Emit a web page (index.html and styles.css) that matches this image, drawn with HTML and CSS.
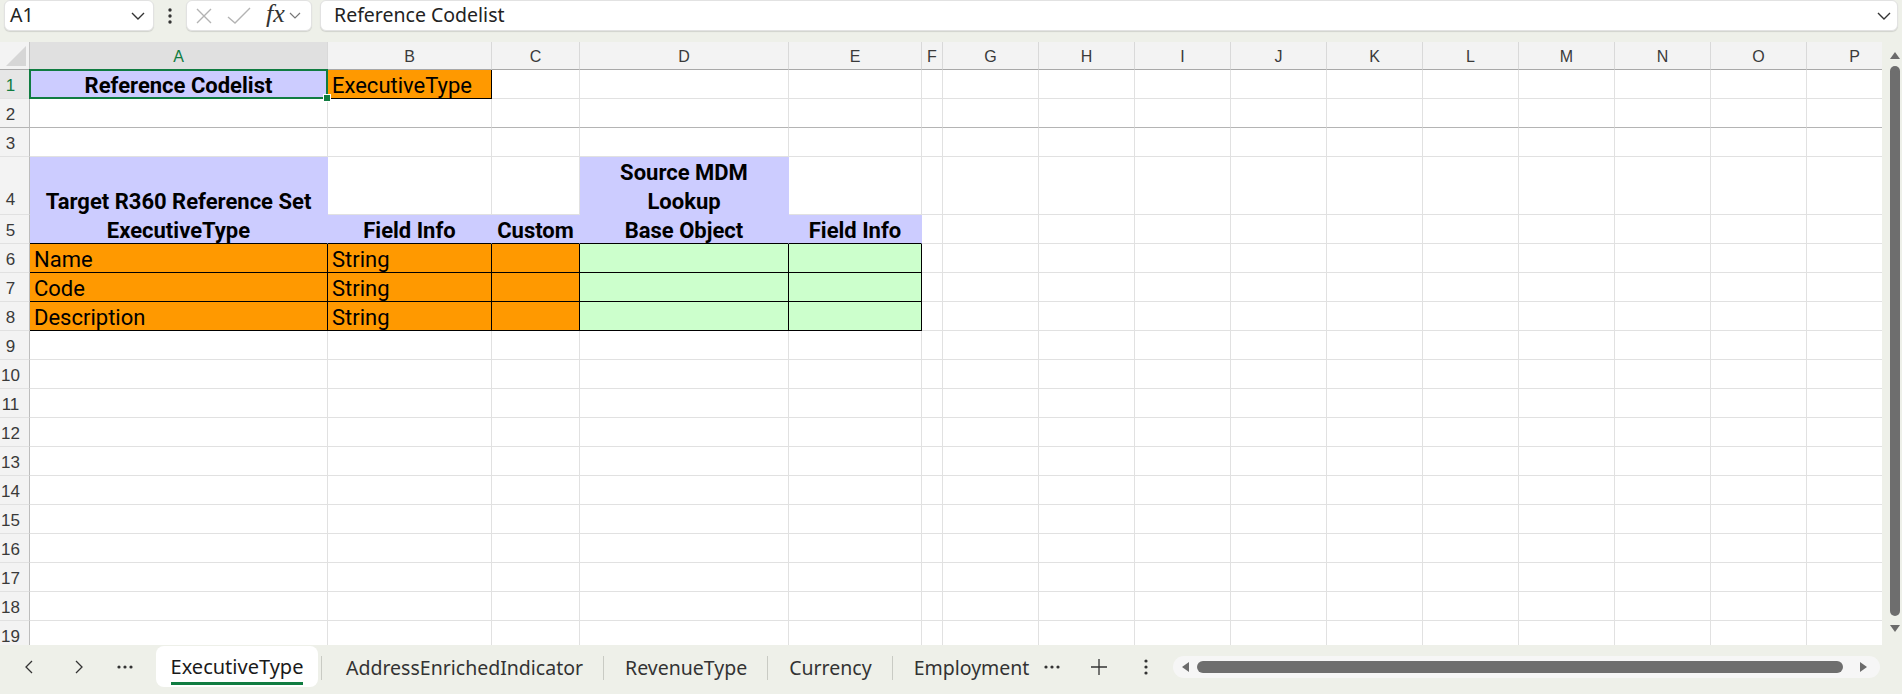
FILE: index.html
```html
<!DOCTYPE html>
<html>
<head>
<meta charset="utf-8">
<link rel="stylesheet" href="styles.css">
</head>
<body>
<div class="fbar">
  <div class="box namebox"><span class="nb-text">A1</span>
    <svg class="chev" width="14" height="8" viewBox="0 0 14 8"><polyline points="1,1 7,7 13,1" fill="none" stroke="#333" stroke-width="1.4"/></svg>
  </div>
  <div class="vdots"><svg width="6" height="16" viewBox="0 0 6 16"><circle cx="3" cy="2" r="1.7" fill="#333"/><circle cx="3" cy="8" r="1.7" fill="#333"/><circle cx="3" cy="14" r="1.7" fill="#333"/></svg></div>
  <div class="box fnbox">
    <svg class="ic-x" width="18" height="18" viewBox="0 0 18 18"><path d="M2 2 L16 16 M16 2 L2 16" stroke="#b3b3b3" stroke-width="1.4" fill="none"/></svg>
    <svg class="ic-ok" width="24" height="18" viewBox="0 0 24 18"><polyline points="1,10 8,16 23,1" stroke="#b3b3b3" stroke-width="1.4" fill="none"/></svg>
    <span class="fx">fx</span>
    <svg class="chev-s" width="12" height="7" viewBox="0 0 12 7"><polyline points="1,1 6,6 11,1" fill="none" stroke="#777" stroke-width="1.2"/></svg>
  </div>
  <div class="box formula"><span class="f-text">Reference Codelist</span>
    <svg class="chev" width="14" height="8" viewBox="0 0 14 8"><polyline points="1,1 7,7 13,1" fill="none" stroke="#333" stroke-width="1.4"/></svg>
  </div>
</div>

<div class="main">
  <div class="sheetwrap">
    <table class="sheet">
      <colgroup>
        <col class="w-rh"><col class="w-a"><col class="w-b"><col class="w-c"><col class="w-d"><col class="w-e"><col class="w-f">
        <col class="w-g"><col class="w-g"><col class="w-g"><col class="w-g"><col class="w-g"><col class="w-g"><col class="w-g"><col class="w-g"><col class="w-g"><col class="w-g">
      </colgroup>
      <thead>
        <tr class="hr">
          <th class="corner"><svg width="22" height="22" viewBox="0 0 22 22"><polygon points="21,1 21,21 1,21" fill="#d6d6d6"/></svg></th>
          <th class="col sel">A</th><th class="col">B</th><th class="col">C</th><th class="col">D</th><th class="col">E</th><th class="col">F</th><th class="col">G</th><th class="col">H</th><th class="col">I</th><th class="col">J</th><th class="col">K</th><th class="col">L</th><th class="col">M</th><th class="col">N</th><th class="col">O</th><th class="col">P</th>
        </tr>
      </thead>
      <tbody>
        <tr class="r">
          <th class="rh sel">1</th>
          <td class="lav b ctr a1">Reference Codelist<span class="selbox"></span><span class="handle"></span></td>
          <td class="org bx">ExecutiveType</td>
          <td></td><td></td><td></td><td></td><td></td><td></td><td></td><td></td><td></td><td></td><td></td><td></td><td></td><td></td>
        </tr>
        <tr class="r frz">
          <th class="rh">2</th>
          <td></td><td></td><td></td><td></td><td></td><td></td><td></td><td></td><td></td><td></td><td></td><td></td><td></td><td></td><td></td><td></td>
        </tr>
        <tr class="r">
          <th class="rh">3</th>
          <td></td><td></td><td></td><td></td><td></td><td></td><td></td><td></td><td></td><td></td><td></td><td></td><td></td><td></td><td></td><td></td>
        </tr>
        <tr class="r tall">
          <th class="rh">4</th>
          <td class="lav b ctr">Target R360 Reference Set</td>
          <td></td><td></td>
          <td class="lav b ctr two"><div class="two-in">Source MDM<br>Lookup</div></td>
          <td></td><td></td><td></td><td></td><td></td><td></td><td></td><td></td><td></td><td></td><td></td><td></td>
        </tr>
        <tr class="r">
          <th class="rh">5</th>
          <td class="lav b ctr hb">ExecutiveType</td>
          <td class="lav b ctr hb">Field Info</td>
          <td class="lav b ctr hb">Custom</td>
          <td class="lav b ctr hb">Base Object</td>
          <td class="lav b ctr hb">Field Info</td>
          <td></td><td></td><td></td><td></td><td></td><td></td><td></td><td></td><td></td><td></td><td></td>
        </tr>
        <tr class="r">
          <th class="rh">6</th>
          <td class="org bx">Name</td><td class="org bx">String</td><td class="org bx"></td><td class="grn bx"></td><td class="grn bx"></td>
          <td></td><td></td><td></td><td></td><td></td><td></td><td></td><td></td><td></td><td></td><td></td>
        </tr>
        <tr class="r">
          <th class="rh">7</th>
          <td class="org bx">Code</td><td class="org bx">String</td><td class="org bx"></td><td class="grn bx"></td><td class="grn bx"></td>
          <td></td><td></td><td></td><td></td><td></td><td></td><td></td><td></td><td></td><td></td><td></td>
        </tr>
        <tr class="r">
          <th class="rh">8</th>
          <td class="org bx">Description</td><td class="org bx">String</td><td class="org bx"></td><td class="grn bx"></td><td class="grn bx"></td>
          <td></td><td></td><td></td><td></td><td></td><td></td><td></td><td></td><td></td><td></td><td></td>
        </tr>
        <tr class="r"><th class="rh">9</th><td></td><td></td><td></td><td></td><td></td><td></td><td></td><td></td><td></td><td></td><td></td><td></td><td></td><td></td><td></td><td></td></tr>
        <tr class="r"><th class="rh">10</th><td></td><td></td><td></td><td></td><td></td><td></td><td></td><td></td><td></td><td></td><td></td><td></td><td></td><td></td><td></td><td></td></tr>
        <tr class="r"><th class="rh">11</th><td></td><td></td><td></td><td></td><td></td><td></td><td></td><td></td><td></td><td></td><td></td><td></td><td></td><td></td><td></td><td></td></tr>
        <tr class="r"><th class="rh">12</th><td></td><td></td><td></td><td></td><td></td><td></td><td></td><td></td><td></td><td></td><td></td><td></td><td></td><td></td><td></td><td></td></tr>
        <tr class="r"><th class="rh">13</th><td></td><td></td><td></td><td></td><td></td><td></td><td></td><td></td><td></td><td></td><td></td><td></td><td></td><td></td><td></td><td></td></tr>
        <tr class="r"><th class="rh">14</th><td></td><td></td><td></td><td></td><td></td><td></td><td></td><td></td><td></td><td></td><td></td><td></td><td></td><td></td><td></td><td></td></tr>
        <tr class="r"><th class="rh">15</th><td></td><td></td><td></td><td></td><td></td><td></td><td></td><td></td><td></td><td></td><td></td><td></td><td></td><td></td><td></td><td></td></tr>
        <tr class="r"><th class="rh">16</th><td></td><td></td><td></td><td></td><td></td><td></td><td></td><td></td><td></td><td></td><td></td><td></td><td></td><td></td><td></td><td></td></tr>
        <tr class="r"><th class="rh">17</th><td></td><td></td><td></td><td></td><td></td><td></td><td></td><td></td><td></td><td></td><td></td><td></td><td></td><td></td><td></td><td></td></tr>
        <tr class="r"><th class="rh">18</th><td></td><td></td><td></td><td></td><td></td><td></td><td></td><td></td><td></td><td></td><td></td><td></td><td></td><td></td><td></td><td></td></tr>
        <tr class="r"><th class="rh">19</th><td></td><td></td><td></td><td></td><td></td><td></td><td></td><td></td><td></td><td></td><td></td><td></td><td></td><td></td><td></td><td></td></tr>
      </tbody>
    </table>
  </div>
  <div class="vscroll">
    <svg width="10" height="7" viewBox="0 0 10 7"><polygon points="5,0 10,7 0,7" fill="#6b6b6b"/></svg>
    <div class="vthumb"></div>
    <svg width="10" height="7" viewBox="0 0 10 7"><polygon points="0,0 10,0 5,7" fill="#6b6b6b"/></svg>
  </div>
</div>

<div class="tabbar">
  <div class="nav nav1"><svg width="8" height="14" viewBox="0 0 8 14"><polyline points="7,1 1,7 7,13" fill="none" stroke="#333" stroke-width="1.3"/></svg></div>
  <div class="nav nav2"><svg width="8" height="14" viewBox="0 0 8 14"><polyline points="1,1 7,7 1,13" fill="none" stroke="#333" stroke-width="1.3"/></svg></div>
  <div class="nav nav3"><svg width="16" height="4" viewBox="0 0 16 4"><circle cx="2" cy="2" r="1.6" fill="#333"/><circle cx="8" cy="2" r="1.6" fill="#333"/><circle cx="14" cy="2" r="1.6" fill="#333"/></svg></div>
  <div class="tabs">
    <div class="tab active"><span class="tab-lbl">ExecutiveType</span></div>
    <div class="sep"></div>
    <div class="tab t-first">AddressEnrichedIndicator</div>
    <div class="sep"></div>
    <div class="tab">RevenueType</div>
    <div class="sep"></div>
    <div class="tab">Currency</div>
    <div class="sep"></div>
    <div class="tab">Employment</div>
  </div>
  <div class="tbtn more"><svg width="16" height="4" viewBox="0 0 16 4"><circle cx="2" cy="2" r="1.6" fill="#333"/><circle cx="8" cy="2" r="1.6" fill="#333"/><circle cx="14" cy="2" r="1.6" fill="#333"/></svg></div>
  <div class="tbtn plus"><svg width="16" height="16" viewBox="0 0 16 16"><path d="M8 0 V16 M0 8 H16" stroke="#333" stroke-width="1.3"/></svg></div>
  <div class="tbtn kebab"><svg width="4" height="16" viewBox="0 0 4 16"><circle cx="2" cy="2" r="1.6" fill="#333"/><circle cx="2" cy="8" r="1.6" fill="#333"/><circle cx="2" cy="14" r="1.6" fill="#333"/></svg></div>
  <div class="hscroll">
    <svg width="7" height="10" viewBox="0 0 7 10"><polygon points="7,0 7,10 0,5" fill="#6b6b6b"/></svg>
    <div class="hthumb"></div>
    <svg width="7" height="10" viewBox="0 0 7 10"><polygon points="0,0 7,5 0,10" fill="#6b6b6b"/></svg>
  </div>
</div>
</body>
</html>
```

FILE: styles.css
```css
* { box-sizing: border-box; }
html, body { margin: 0; padding: 0; }
body {
  width: 1902px;
  height: 694px;
  overflow: hidden;
  background: #eef0e9;
  font-family: "Noto Sans", "Open Sans", sans-serif;
  color: #222;
}

/* formula bar */
.fbar {
  height: 42px;
  display: flex;
  align-items: flex-start;
  padding: 0 4px 0 4px;
  gap: 8px;
}
.box {
  height: 31px;
  background: #fff;
  border: 1px solid #e2e2e2;
  border-radius: 6px;
  box-shadow: 0 1px 1px rgba(0,0,0,0.12);
  display: flex;
  align-items: center;
}
.namebox { width: 150px; padding: 0 8px 0 5px; justify-content: space-between; }
.nb-text { font-size: 19.5px; color: #222; margin-top: -2px; }
.vdots { width: 16px; height: 31px; display: flex; align-items: center; justify-content: center; }
.fnbox { width: 126px; padding-left: 8px; }
.ic-x { margin-right: 14px; }
.ic-ok { margin-right: 15px; }
.fx {
  font-family: "Liberation Serif", serif;
  font-style: italic;
  font-size: 26px;
  color: #333;
  line-height: 26px;
  margin-right: 4px;
  margin-top: -3px;
}
.formula { flex: 1; padding: 0 6px 0 13px; justify-content: space-between; }
.f-text { font-size: 19.5px; color: #222; margin-top: -2px; }

/* main area */
.main { display: flex; height: 603px; }
.sheetwrap { width: 1882px; height: 603px; overflow: hidden; background: #fff; }
.sheet {
  border-collapse: separate;
  border-spacing: 0;
  table-layout: fixed;
  width: 1903px;
  font-family: Roboto, "Liberation Sans", sans-serif;
  font-size: 22px;
  color: #000;
}
.w-rh { width: 30px; }
.w-a { width: 298px; }
.w-b { width: 164px; }
.w-c { width: 88px; }
.w-d { width: 209px; }
.w-e { width: 133px; }
.w-f { width: 21px; }
.w-g { width: 96px; }

.hr { height: 28px; }
.corner {
  background: #f3f3f3;
  border-right: 1px solid #c4c4c4;
  border-bottom: 1px solid #a8a8a8;
  padding: 0;
  vertical-align: bottom;
  text-align: right;
}
.corner svg { display: block; margin: 0 2px 2px auto; }
.col {
  background: #f3f3f3;
  border-right: 1px solid #d9d9d9;
  border-bottom: 1px solid #a8a8a8;
  font-family: "Liberation Sans", Arial, sans-serif;
  font-size: 16px;
  font-weight: normal;
  color: #3a3a3a;
  padding: 2px 0 0 0;
  text-align: center;
}
.col.sel { background: #e0e0e0; color: #107c41; }

.r { height: 29px; }
.r.tall { height: 58px; }
.rh {
  background: #f3f3f3;
  border-right: 1px solid #bdbdbd;
  border-bottom: 1px solid #e1e1e1;
  font-family: "Liberation Sans", Arial, sans-serif;
  font-size: 17px;
  font-weight: normal;
  color: #3a3a3a;
  text-align: center;
  padding: 3px 8px 0 0;
  vertical-align: middle;
  white-space: nowrap;
}
.tall .rh { vertical-align: bottom; padding-bottom: 4px; }
.rh.sel { color: #107c41; background: #e6e6e6; }

td {
  border-right: 1px solid #e1e1e1;
  border-bottom: 1px solid #e1e1e1;
  padding: 0 4px;
  white-space: nowrap;
  overflow: hidden;
  vertical-align: bottom;
  line-height: 24px;
}
.frz td, .frz .rh { border-bottom-color: #b4b4b4; }

.b { font-weight: bold; }
.ctr { text-align: center; }
.lav { background: #ccccff; border-right-color: #ccccff; border-bottom-color: #ccccff; }
.org { background: #ff9900; border-right-color: #ff9900; border-bottom-color: #ff9900; }
.grn { background: #ccffcc; border-right-color: #ccffcc; border-bottom-color: #ccffcc; }
.hb { border-bottom-color: #000; }
.bx { border-right-color: #000; border-bottom-color: #000; }
.two { line-height: 29px; }
.two-in { margin-bottom: -2px; }

.a1 { position: relative; overflow: visible; }
.selbox {
  position: absolute;
  left: -1px;
  top: -1px;
  right: -1px;
  bottom: -1px;
  border: 2px solid #107c41;
  pointer-events: none;
}
.handle {
  position: absolute;
  right: -4px;
  bottom: -4px;
  width: 8px;
  height: 8px;
  background: #107c41;
  border: 1px solid #fff;
}

/* vertical scrollbar */
.vscroll {
  width: 20px;
  height: 603px;
  padding: 10px 0 10px 6px;
  display: flex;
  flex-direction: column;
  align-items: center;
}
.vthumb {
  width: 10px;
  height: 550px;
  background: #6e6e6e;
  border-radius: 5px;
  margin: 7px 0 9px 0;
}

/* tab bar */
.tabbar {
  height: 49px;
  display: flex;
  align-items: center;
  padding: 0 0 6px 9px;
  font-size: 19.5px;
  color: #333;
}
.nav { height: 30px; display: flex; align-items: center; justify-content: center; flex-shrink: 0; }
.nav1 { width: 40px; }
.nav2 { width: 40px; margin-left: 10px; }
.nav3 { width: 36px; margin-left: 8px; }
.tabs {
  width: 881px;
  flex-shrink: 0;
  margin-left: 13px;
  display: flex;
  align-items: center;
  overflow: hidden;
  white-space: nowrap;
}
.tabs > * { flex-shrink: 0; }
.tab { padding: 3px 20px 0 21px; line-height: 22px; }
.tab.t-first { padding-left: 24px; }
.tab.active {
  width: 162px;
  height: 41px;
  padding: 0 0 2px 0;
  background: #fff;
  border-radius: 8px;
  display: flex;
  align-items: flex-end;
  justify-content: center;
  margin-right: 3px;
  color: #1a1a1a;
  font-size: 20px;
}
.tab-lbl {
  line-height: 22px;
  padding-bottom: 4px;
  border-bottom: 3px solid #107c41;
}
.sep { width: 1px; height: 24px; background: #c9cbc4; margin-top: 3px; }
.tbtn { width: 30px; height: 30px; display: flex; align-items: center; justify-content: center; flex-shrink: 0; }
.plus { margin-left: 17px; }
.kebab { margin-left: 17px; }
.hscroll {
  flex-shrink: 0;
  margin-left: 12px;
  width: 707px;
  height: 22px;
  background: #f6f6f6;
  border-radius: 11px;
  display: flex;
  align-items: center;
  padding-left: 9px;
}
.hthumb {
  width: 646px;
  height: 12px;
  background: #6e6e6e;
  border-radius: 6px;
  margin: 0 17px 0 8px;
}
```
